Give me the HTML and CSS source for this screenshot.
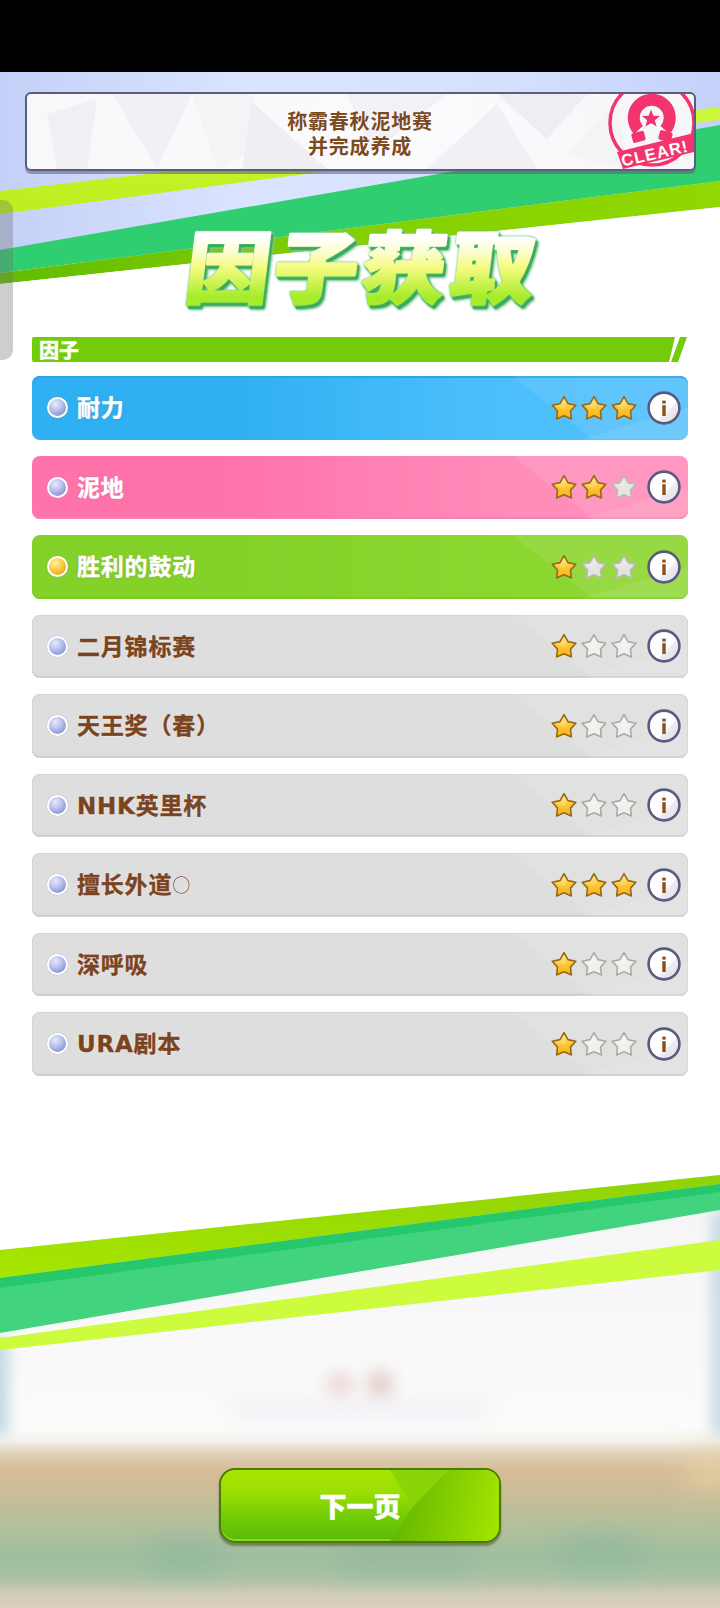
FILE: index.html
```html
<!DOCTYPE html>
<html lang="zh">
<head>
<meta charset="utf-8">
<title>因子获取</title>
<link rel="stylesheet" href="styles.css">
</head>
<body>
<div class="page">
  <svg class="backdrop" viewBox="0 0 720 1608" aria-hidden="true">
    <defs>
      <linearGradient id="sky" x1="0" y1="0" x2="1" y2="0">
        <stop offset="0" stop-color="#c4d0f7"/><stop offset=".35" stop-color="#dbe4ff"/><stop offset=".7" stop-color="#d6e0fd"/><stop offset="1" stop-color="#c4d2fb"/>
      </linearGradient>
      <linearGradient id="ground" gradientUnits="userSpaceOnUse" x1="0" y1="1190" x2="0" y2="1608">
        <stop offset="0" stop-color="#f5f5f7"/><stop offset=".38" stop-color="#f9f9fa"/><stop offset=".57" stop-color="#fbfbfb"/><stop offset=".6" stop-color="#f6f2ec"/><stop offset=".63" stop-color="#e0d1ba"/><stop offset=".67" stop-color="#d6bd96"/><stop offset=".73" stop-color="#c8bd98"/><stop offset=".8" stop-color="#b4c09c"/><stop offset=".88" stop-color="#9dbf9f"/><stop offset=".93" stop-color="#abc2a5"/><stop offset=".97" stop-color="#d4cdb9"/><stop offset="1" stop-color="#d9d0bf"/>
      </linearGradient>
      <linearGradient id="limeTop" x1="0" y1="1" x2="1" y2="0">
        <stop offset="0" stop-color="#bfee1e"/><stop offset="1" stop-color="#ccf83c"/>
      </linearGradient>
      <linearGradient id="limeDark" x1="0" y1="0" x2="1" y2="0">
        <stop offset="0" stop-color="#62bc00"/><stop offset=".5" stop-color="#84d000"/><stop offset="1" stop-color="#90d800"/>
      </linearGradient>
      <linearGradient id="limeLow" x1="0" y1="1" x2="1" y2="0">
        <stop offset="0" stop-color="#a6e600"/><stop offset="1" stop-color="#8fd208"/>
      </linearGradient>
      <filter id="soft" filterUnits="userSpaceOnUse" x="-60" y="1180" width="840" height="440"><feGaussianBlur stdDeviation="8"/></filter>
      <filter id="softer" filterUnits="userSpaceOnUse" x="-60" y="1180" width="840" height="440"><feGaussianBlur stdDeviation="15"/></filter>
    </defs>
    <rect width="720" height="1608" fill="#fff"/>
    <rect y="72" width="720" height="190" fill="url(#sky)"/>
    <polygon points="0,191 720,107 720,120 0,214" fill="url(#limeTop)"/>
    <polygon points="0,250 720,125 720,181 0,273" fill="#2fce70"/>
    <polygon points="0,273 720,181 720,207 0,284" fill="url(#limeDark)"/>
    <polygon points="0,284 720,207 720,262 0,320" fill="#fff"/>
    <polygon points="0,1250 720,1175 720,1608 0,1608" fill="url(#ground)"/>
    <rect x="-8" y="1340" width="14" height="95" fill="#a9cdd6" filter="url(#soft)"/>
    <rect x="714" y="1210" width="14" height="225" fill="#b4cfdc" filter="url(#soft)"/>
    <rect x="230" y="1398" width="260" height="20" fill="#f3f2f6" filter="url(#soft)"/>
    <ellipse cx="340" cy="1384" rx="15" ry="12" fill="#ead9d5" filter="url(#soft)"/>
    <ellipse cx="380" cy="1384" rx="14" ry="14" fill="#e4d0cc" filter="url(#soft)"/>
    <rect x="150" y="1545" width="70" height="20" fill="#8eb39c" filter="url(#softer)"/>
    <rect x="340" y="1548" width="130" height="18" fill="#92b49c" filter="url(#softer)"/>
    <rect x="560" y="1540" width="80" height="22" fill="#90b59c" filter="url(#softer)"/>
    <rect x="690" y="1455" width="40" height="30" fill="#e6d4a6" filter="url(#softer)"/>
    <polygon points="0,1250 720,1175 720,1184 0,1278" fill="url(#limeLow)"/>
    <polygon points="0,1278 720,1184 720,1210 0,1333" fill="#42d37f"/>
    <polygon points="0,1278 720,1184 720,1192 0,1288" fill="#25c96c"/>
    <polygon points="0,1338 720,1240 720,1270 0,1350" fill="#cdfb3e"/>
  </svg>

  <div class="status-bar"></div>
  <div class="edge-handle"></div>

  <main class="stage">
    <section class="mission">
      <svg class="facets" viewBox="0 0 667 75" preserveAspectRatio="none" aria-hidden="true">
        <polygon points="20,20 70,5 60,75 30,75" fill="#f0f0f4"/>
        <polygon points="85,0 165,0 130,75" fill="#f1f1f5"/>
        <polygon points="165,0 225,0 240,50 190,75" fill="#f4f4f7"/>
        <polygon points="225,8 300,75 215,75" fill="#efeff3"/>
        <polygon points="320,0 420,0 345,60" fill="#f2f2f6"/>
        <polygon points="400,75 470,10 510,75" fill="#f1f1f5"/>
        <polygon points="470,0 560,0 520,45" fill="#eeeef2"/>
        <polygon points="540,60 590,5 600,75" fill="#f4f4f7"/>
      </svg>
      <p class="mission-text">称霸春秋泥地赛<br>并完成养成</p>
      <svg class="clear-stamp" viewBox="0 0 110 75">
        <circle cx="68" cy="29" r="42" fill="none" stroke="#f3346e" stroke-width="3.5"/>
        <path d="M54.5 36 A18 18 0 1 1 81 36" fill="none" stroke="#f3346e" stroke-width="12"/>
        <rect x="48" y="38" width="13" height="10" rx="2" fill="#f3346e" transform="rotate(-15 54 43)"/>
        <rect x="75" y="37" width="13" height="10" rx="2" fill="#f3346e" transform="rotate(15 81 42)"/>
        <polygon points="67,15.5 69.4,21.7 76,22 70.9,26.2 72.6,32.6 67,29 61.4,32.6 63.1,26.2 58,22 64.6,21.7" fill="#f3346e"/>
        <polygon points="33,58 110,39 110,58 39,75" fill="#f3346e"/>
        <text class="clear-label" x="71" y="65" text-anchor="middle" transform="rotate(-13 71 60)">CLEAR!</text>
      </svg>
    </section>

    <h1 class="title">
      <svg class="title-art" viewBox="0 0 380 104">
        <defs>
          <linearGradient id="titleFill" gradientUnits="userSpaceOnUse" x1="0" y1="-73" x2="0" y2="10">
            <stop offset=".1" stop-color="#ffffff"/><stop offset=".27" stop-color="#fdfed8"/><stop offset=".5" stop-color="#f5fb80"/><stop offset=".88" stop-color="#a6ec2a"/>
          </linearGradient>
        </defs>
        <text class="title-text" text-anchor="middle" transform="translate(187 77) skewX(-7) scale(1 .93)" fill="url(#titleFill)" stroke="url(#titleFill)">因子获取</text>
      </svg>
    </h1>

    <h2 class="section-bar"><span class="section-label">因子</span></h2>

    <ul class="factors">
      <li class="factor factor-blue">
        <span class="dot"></span><span class="name">耐力</span>
        <span class="stars"><svg class="star on"><use href="#star"/></svg><svg class="star on"><use href="#star"/></svg><svg class="star on"><use href="#star"/></svg></span>
        <svg class="info"><use href="#info"/></svg>
      </li>
      <li class="factor factor-pink">
        <span class="dot"></span><span class="name">泥地</span>
        <span class="stars"><svg class="star on"><use href="#star"/></svg><svg class="star on"><use href="#star"/></svg><svg class="star off"><use href="#star"/></svg></span>
        <svg class="info"><use href="#info"/></svg>
      </li>
      <li class="factor factor-green">
        <span class="dot dot-gold"></span><span class="name">胜利的鼓动</span>
        <span class="stars"><svg class="star on"><use href="#star"/></svg><svg class="star off"><use href="#star"/></svg><svg class="star off"><use href="#star"/></svg></span>
        <svg class="info"><use href="#info"/></svg>
      </li>
      <li class="factor factor-gray">
        <span class="dot"></span><span class="name">二月锦标赛</span>
        <span class="stars"><svg class="star on"><use href="#star"/></svg><svg class="star off"><use href="#star"/></svg><svg class="star off"><use href="#star"/></svg></span>
        <svg class="info"><use href="#info"/></svg>
      </li>
      <li class="factor factor-gray">
        <span class="dot"></span><span class="name">天王奖（春）</span>
        <span class="stars"><svg class="star on"><use href="#star"/></svg><svg class="star off"><use href="#star"/></svg><svg class="star off"><use href="#star"/></svg></span>
        <svg class="info"><use href="#info"/></svg>
      </li>
      <li class="factor factor-gray">
        <span class="dot"></span><span class="name">NHK英里杯</span>
        <span class="stars"><svg class="star on"><use href="#star"/></svg><svg class="star off"><use href="#star"/></svg><svg class="star off"><use href="#star"/></svg></span>
        <svg class="info"><use href="#info"/></svg>
      </li>
      <li class="factor factor-gray">
        <span class="dot"></span><span class="name">擅长外道<span class="name-mark">○</span></span>
        <span class="stars"><svg class="star on"><use href="#star"/></svg><svg class="star on"><use href="#star"/></svg><svg class="star on"><use href="#star"/></svg></span>
        <svg class="info"><use href="#info"/></svg>
      </li>
      <li class="factor factor-gray">
        <span class="dot"></span><span class="name">深呼吸</span>
        <span class="stars"><svg class="star on"><use href="#star"/></svg><svg class="star off"><use href="#star"/></svg><svg class="star off"><use href="#star"/></svg></span>
        <svg class="info"><use href="#info"/></svg>
      </li>
      <li class="factor factor-gray">
        <span class="dot"></span><span class="name">URA剧本</span>
        <span class="stars"><svg class="star on"><use href="#star"/></svg><svg class="star off"><use href="#star"/></svg><svg class="star off"><use href="#star"/></svg></span>
        <svg class="info"><use href="#info"/></svg>
      </li>
    </ul>

    <button class="next" type="button"><span class="next-label">下一页</span></button>
  </main>

  <svg class="sprites" aria-hidden="true">
    <defs>
      <linearGradient id="goldFill" x1="0" y1="0" x2="0" y2="1">
        <stop offset="0" stop-color="#ffe066"/><stop offset=".55" stop-color="#fcc630"/><stop offset="1" stop-color="#f8ae1c"/>
      </linearGradient>
      <linearGradient id="infoFill" x1="0" y1="0" x2="1" y2="1">
        <stop offset="0" stop-color="#ffffff"/><stop offset=".6" stop-color="#fdfdfd"/><stop offset=".62" stop-color="#ececf1"/><stop offset="1" stop-color="#dcdce3"/>
      </linearGradient>
      <symbol id="star" viewBox="0 0 26 26">
        <polygon class="star-body" points="13,1.6 17,8.6 24.8,10.2 19.5,16.1 20.4,24 13,20.8 5.6,24 6.5,16.1 1.2,10.2 9,8.6"/>
        <polygon class="star-shine" points="13,3 16.2,9.4 13,14 4,11 9.6,9.4"/>
      </symbol>
      <symbol id="info" viewBox="0 0 34 34">
        <circle cx="17" cy="17" r="15.4" fill="url(#infoFill)" stroke="#5a5a80" stroke-width="2.6"/>
        <rect x="15.3" y="9.6" width="3.4" height="3" fill="#8a4f1c"/>
        <rect x="15.3" y="14.2" width="3.4" height="10.8" fill="#8a4f1c"/>
      </symbol>
    </defs>
  </svg>
</div>
</body>
</html>
```
FILE: styles.css
```css
* { box-sizing: border-box; }

html, body {
  margin: 0;
  padding: 0;
  background: #000;
}

body {
  font-family: "Noto Sans CJK SC", "Liberation Sans", sans-serif;
}

.page {
  position: relative;
  width: 720px;
  height: 1608px;
  overflow: hidden;
  display: flex;
  flex-direction: column;
}

.backdrop {
  position: absolute;
  inset: 0;
  width: 720px;
  height: 1608px;
}

.sprites {
  position: absolute;
  width: 0;
  height: 0;
}

.status-bar {
  position: relative;
  flex: 0 0 72px;
  background: #000;
}

.edge-handle {
  position: absolute;
  left: 0;
  top: 200px;
  width: 13px;
  height: 160px;
  border-radius: 0 10px 10px 0;
  background: rgba(110, 110, 110, 0.34);
  z-index: 3;
}

.stage {
  position: relative;
  flex: 1;
  display: flex;
  flex-direction: column;
  align-items: center;
  padding: 20px 32px 65px;
}

/* mission banner */
.mission {
  position: relative;
  flex: none;
  width: 671px;
  height: 79px;
  margin: 0 -8px;
  padding-top: 4px;
  display: flex;
  align-items: center;
  justify-content: center;
  overflow: hidden;
  background: linear-gradient(90deg, #f8f8fb, #fbfbfd 60%, #f6f6f9);
  border: 2px solid #5c5c7c;
  border-radius: 6px;
  box-shadow: 0 3px 0 rgba(90, 90, 120, 0.55);
}

.facets {
  position: absolute;
  inset: 0;
  width: 100%;
  height: 100%;
}

.mission-text {
  position: relative;
  margin: 0;
  color: #7c4a1e;
  font-size: 20px;
  font-weight: 700;
  line-height: 24.5px;
  text-align: center;
  letter-spacing: 0.8px;
  text-shadow: 0 0 2px #fff;
}

.clear-stamp {
  position: absolute;
  right: 0;
  top: 0;
  width: 110px;
  height: 75px;
}

.clear-label {
  fill: #fff;
  font-family: "Liberation Sans", sans-serif;
  font-size: 16.5px;
  font-weight: 700;
  letter-spacing: 1px;
}

/* title */
.title {
  flex: none;
  width: 380px;
  height: 117px;
  margin: 49px 0 0 4px;
  line-height: 1;
  font-size: 84px;
  font-weight: 900;
}

.title-art {
  display: block;
  width: 380px;
  height: 104px;
  overflow: visible;
  filter: drop-shadow(0 0 1px #5cc27a) drop-shadow(2px 3px 0 #3aa860) drop-shadow(1px 1px 1px #8ed09a);
}

.title-text {
  font-family: "Noto Sans CJK SC", sans-serif;
  font-size: 84px;
  font-weight: 900;
  letter-spacing: 4px;
  stroke-width: 3px;
  stroke-linejoin: round;
}

/* section header */
.section-bar {
  position: relative;
  flex: none;
  align-self: stretch;
  height: 25px;
  margin: 0 1px 14px 0;
  font-size: 20px;
  font-weight: 900;
  line-height: 25px;
  color: #fff;
}

.section-bar::after {
  content: "";
  position: absolute;
  right: 0;
  top: 0;
  width: 16px;
  height: 100%;
  background: #72cc0a;
  clip-path: polygon(9px 0, 100% 0, 7px 100%, 0 100%);
}

.section-label {
  display: block;
  height: 100%;
  margin-right: 12px;
  padding-left: 7px;
  background: #72cc0a;
  border-radius: 2px 0 0 2px;
  clip-path: polygon(0 0, 100% 0, calc(100% - 6px) 100%, 0 100%);
  -webkit-text-stroke: 0.3px #fff;
}

/* factor list */
.factors {
  list-style: none;
  margin: 0;
  padding: 0;
  flex: none;
  align-self: stretch;
  display: flex;
  flex-direction: column;
  gap: 16px;
}

.factor {
  position: relative;
  height: 63.5px;
  display: flex;
  align-items: center;
  padding: 0 7px 0 15px;
  border-radius: 8px;
  overflow: hidden;
}

.factor::before,
.factor::after {
  content: "";
  position: absolute;
  inset: 0;
  background: rgba(255, 255, 255, 0.09);
}

.factor::before {
  clip-path: polygon(480px 0, 100% 0, 100% 100%, 561px 100%);
}

.factor::after {
  clip-path: polygon(548px 100%, 100% 32px, 100% 100%);
}

.factor-blue {
  background: linear-gradient(90deg, #2fb0f2 30%, #4cbffb 70%, #52c0fb);
  box-shadow: inset 0 2px 0 #2aa4ea;
}

.factor-pink {
  background: linear-gradient(90deg, #ff73aa 30%, #ff8dba 75%);
  box-shadow: inset 0 -2px 0 #fb7fb0;
}

.factor-green {
  background: linear-gradient(90deg, #84d12a 30%, #8cd630 75%);
  box-shadow: inset 0 -2px 0 #7ccc24;
}

.factor-gray {
  background: #dedede;
  box-shadow: inset 0 0 0 1px #d4d4d4, inset 0 -2px 0 #cbcbcb;
}

.dot {
  position: relative;
  z-index: 1;
  flex: none;
  width: 21px;
  height: 21px;
  border: 2px solid #fff;
  border-radius: 50%;
  background: radial-gradient(circle at 38% 30%, #e6ebfb 0, #b9c2ec 40%, #8e98d6 75%, #a9b8ea 100%);
  box-shadow: 0 0 1px #8289b8;
}

.dot-gold {
  background: radial-gradient(circle at 38% 30%, #fff0a8 0, #fccb3e 45%, #eea51a 80%, #f7bf3e 100%);
}

.name {
  position: relative;
  z-index: 1;
  margin: 0 0 3px 9px;
  font-family: "DejaVu Sans", "Noto Sans CJK SC", sans-serif;
  font-size: 23px;
  font-weight: 700;
  letter-spacing: 0.8px;
  color: #fff;
  -webkit-text-stroke: 0.4px #fff;
  text-shadow: 0 0 3px rgba(120, 110, 110, 0.35);
}

.factor-gray .name {
  color: #7b4420;
  -webkit-text-stroke: 0.4px #7b4420;
  text-shadow: 0 0 2px #fff;
}

.factor-gray .name-mark {
  font-family: "Noto Sans CJK SC", sans-serif;
  font-size: 18px;
  font-weight: 400;
  vertical-align: 1px;
  -webkit-text-stroke: 0;
}

.stars {
  position: relative;
  z-index: 1;
  display: flex;
  gap: 4px;
  margin-left: auto;
}

.star {
  display: block;
  width: 26px;
  height: 26px;
  overflow: visible;
}

.star-body {
  stroke-linejoin: round;
  stroke-width: 1.6px;
}

.star-shine {
  fill: rgba(255, 255, 255, 0.2);
  stroke: none;
}

.star.on {
  fill: url(#goldFill);
  stroke: #96691b;
}

.star.off {
  fill: #e4e4e4;
  stroke: #bdb8b0;
}

.factor-gray .star.off {
  fill: #f0f0f0;
  stroke: #b0a9a0;
}

.info {
  position: relative;
  z-index: 1;
  flex: none;
  width: 34px;
  height: 34px;
  margin-left: 10px;
}

/* next button */
.next {
  position: relative;
  flex: none;
  width: 282px;
  height: 75px;
  margin-top: auto;
  padding: 0;
  overflow: hidden;
  font-family: inherit;
  font-size: 27px;
  font-weight: 900;
  color: #fff;
  background: linear-gradient(180deg, #a6e600 0, #9cdf02 30%, #6fca06 70%, #58b908 100%);
  border: 2px solid #4b7a05;
  border-radius: 16px;
  box-shadow: inset 0 -2px 0 rgba(160, 230, 40, 0.7), 0 3px 2px rgba(60, 70, 40, 0.5);
}

.next::before {
  content: "";
  position: absolute;
  inset: 0;
  background: linear-gradient(90deg, #97dc0a, #85d006);
  clip-path: polygon(169px 0, 227px 0, 192px 37px);
}

.next::after {
  content: "";
  position: absolute;
  inset: 0;
  background: linear-gradient(100deg, #5cb200 58%, #a0e200 97%);
  clip-path: polygon(227px 0, 100% 0, 100% 100%, 169px 100%, 192px 37px);
}

.next-label {
  position: relative;
  z-index: 1;
  display: block;
  -webkit-text-stroke: 0.4px #fff;
}
```
